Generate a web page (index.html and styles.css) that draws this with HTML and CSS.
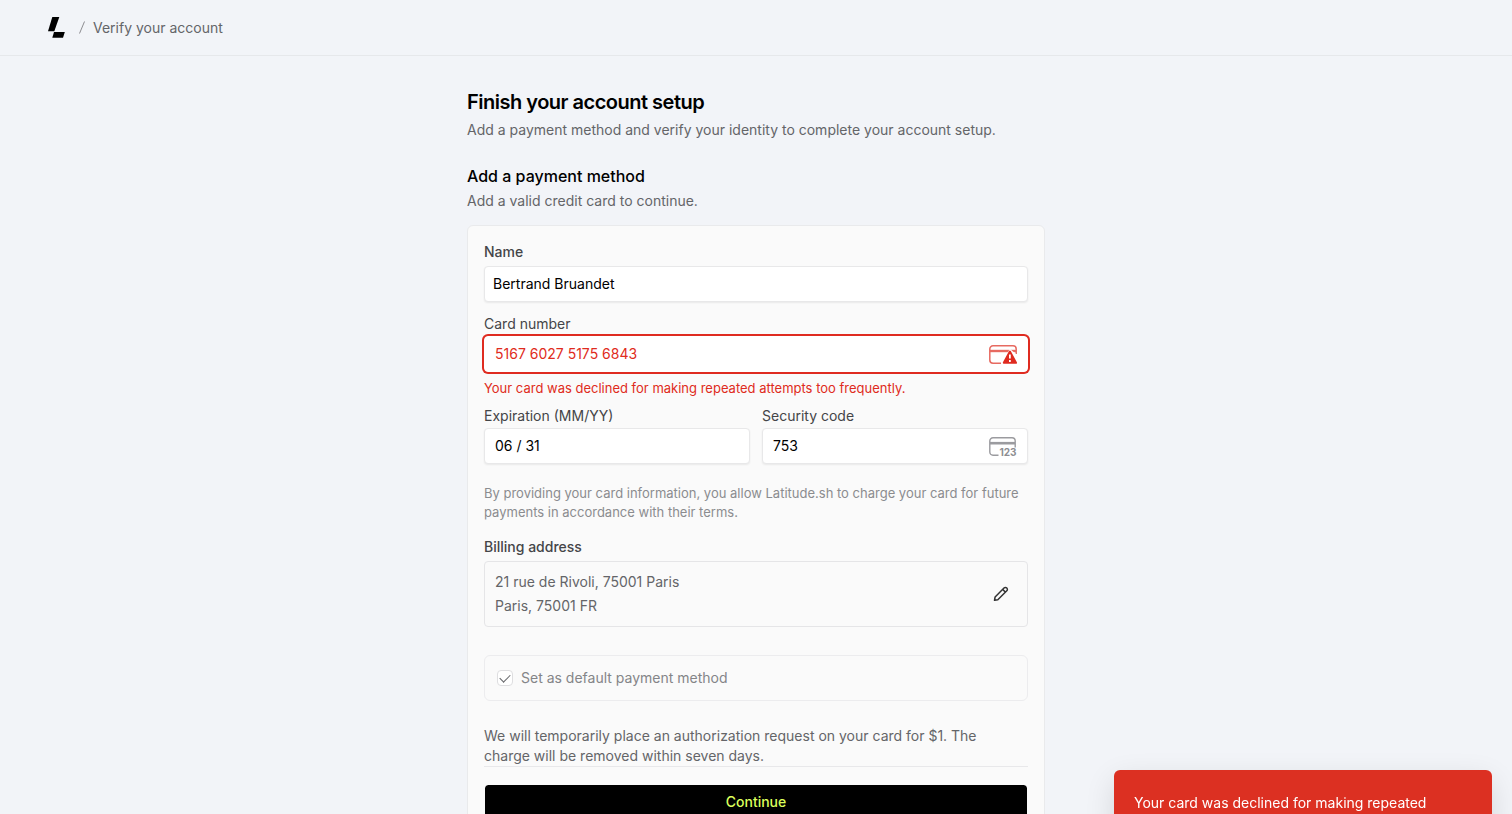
FILE: index.html
```html
<!DOCTYPE html>
<html lang="en">
<head>
    <meta charset="utf-8">
    <meta name="viewport" content="width=device-width, initial-scale=1">
    <title>Verify your account</title>
    <link rel="stylesheet" href="styles.css">
</head>
<body>
    <header class="topbar">
        <a href="#" class="logo" aria-label="Latitude.sh">
            <svg width="17" height="21" viewBox="0 0 17 21">
                <path d="M4.300 0H11.300L6.300 14.300H0z"></path>
                <path d="M6 15H16.800L15 20.800H4.300z"></path>
            </svg>
        </a>
        <svg class="slash" width="6" height="13" viewBox="0 0 6 13"><path d="M5.500.5l-5 12"></path></svg>
        <span class="crumb">Verify your account</span>
    </header>

    <main class="setup">
        <h1>Finish your account setup</h1>
        <p class="intro">Add a payment method and verify your identity to complete your account setup.</p>

        <h2>Add a payment method</h2>
        <p class="hint">Add a valid credit card to continue.</p>

        <form class="card">
            <div class="field">
                <label for="name">Name</label>
                <input type="text" id="name" class="name-input" value="Bertrand Bruandet">
            </div>

            <div class="field stripe-field">
                <label for="number">Card number</label>
                <div class="input-wrap">
                    <input type="text" id="number" class="invalid" value="5167 6027 5175 6843" aria-describedby="number-error">
                    <svg class="input-icon" width="28" height="20" viewBox="0 0 28 20">
                        <g fill="none" stroke="#e76a61" stroke-width="1.500">
                            <path d="M12 18.200H4A3.200 3.200 0 0 1 .8 15V4A3.200 3.200 0 0 1 4 .8h20A3.200 3.200 0 0 1 27.200 4v5"></path>
                            <path d="M1 6h26" stroke-width="2.400"></path>
                        </g>
                        <path d="M20.800 3.800L12.500 19.500H28V10z" fill="#fff"></path>
                        <path d="M20.900 6.600L27 17.800H14.800z" fill="#df2b20" stroke="#df2b20" stroke-width="2" stroke-linejoin="round"></path>
                        <path d="M20.900 9.500v4M20.900 15v2" stroke="#fff" stroke-width="1.800"></path>
                    </svg>
                </div>
                <p class="error" id="number-error">Your card was declined for making repeated attempts too frequently.</p>
            </div>

            <div class="field-row">
                <div>
                    <label for="expiry">Expiration (MM/YY)</label>
                    <input type="text" id="expiry" value="06 / 31">
                </div>
                <div>
                    <label for="cvc">Security code</label>
                    <div class="input-wrap">
                        <input type="text" id="cvc" value="753">
                        <svg class="input-icon" width="28" height="20" viewBox="0 0 28 20">
                            <g fill="none" stroke="#9b9b9f" stroke-width="1.400">
                                <path d="M9.500 18.200H4A3.200 3.200 0 0 1 .8 15V4A3.200 3.200 0 0 1 4 .8h19A3.200 3.200 0 0 1 26.200 4v6.500"></path>
                                <path d="M1 6.200h25" stroke-width="2.600"></path>
                            </g>
                            <text x="10.500" y="19">123</text>
                        </svg>
                    </div>
                </div>
            </div>

            <p class="terms">By providing your card information, you allow Latitude.sh to charge your card for future payments in accordance with their terms.</p>

            <h3>Billing address</h3>
            <div class="address">
                <address>21 rue de Rivoli, 75001 Paris<br>Paris, 75001 FR</address>
                <button type="button" class="edit" aria-label="Edit address">
                    <svg width="16" height="16" viewBox="0 0 16 16">
                        <path d="M1.500 14.300l.6-3.300 8.900-9a1.900 1.900 0 0 1 2.800 2.800l-9 8.900zM9.700 3.400l2.800 2.800"></path>
                    </svg>
                </button>
            </div>

            <label class="default-method">
                <input type="checkbox" checked disabled>
                <span>Set as default payment method</span>
            </label>

            <p class="notice">We will temporarily place an authorization request on your card for $1. The charge will be removed within seven days.</p>

            <button type="submit" class="continue">Continue</button>
        </form>
    </main>

    <div class="toast" role="alert">Your card was declined for making repeated attempts too frequently.</div>
</body>
</html>
```
FILE: styles.css
```css
* { box-sizing: border-box; }
body { margin: 0; background: #f2f4f8; color: #000; font-family: Inter, "Liberation Sans", sans-serif; font-size: 14px; line-height: 20px; }
h1, h2, h3, p { margin: 0; }
input, button { font: inherit; }

.topbar { display: flex; align-items: center; height: 56px; padding: 0 48px; border-bottom: 1px solid #e6e8eb; }
.logo { display: flex; }
.slash { margin: 0 8px 0 14px; fill: none; stroke: #8c8d90; }
.crumb { color: #646568; }

.setup { max-width: 578px; margin: 0 auto; padding: 32px 0; }
h1 { font-size: 20px; line-height: 28px; font-weight: 600; letter-spacing: -0.025em; }
.intro { margin-top: 4px; color: #646568; }
h2 { margin-top: 24px; font-size: 16px; line-height: 24px; font-weight: 500; }
.hint { margin-top: 3px; color: #646568; }

.card { margin-top: 14px; padding: 16px; background: #fafafa; border: 1px solid #e9eaec; border-radius: 6px; }
label, h3 { display: block; color: #444548; font-size: 14px; font-weight: 500; }
.card input[type="text"] { display: block; width: 100%; height: 36px; padding: 0 10px 2px; background: #fff; color: #000; border: 1px solid #e8e8e9; border-radius: 4px; box-shadow: 0 1px 2px rgba(0,0,0,0.07); outline: none; }
.card input.name-input { margin-top: 4px; padding-left: 8px; }
.stripe-field { margin-top: 12px; }
.stripe-field label, .field-row label { margin-bottom: 2px; font-weight: 400; }
.card input.invalid { color: #df2b20; border-color: #fff; box-shadow: 0 0 0 2px #df2b20; }
.input-wrap { position: relative; }
.input-icon { position: absolute; top: 9px; right: 11px; }
.input-icon text { font: 700 10px Inter, sans-serif; fill: #8d8d91; }
.error { margin-top: 6px; color: #df2b20; font-size: 13px; }
.field-row { display: grid; grid-template-columns: 1fr 1fr; gap: 12px; margin-top: 8px; }
.terms { margin-top: 20px; color: #8b8c8f; font-size: 13px; line-height: 19px; }

h3 { margin-top: 15px; }
.address { display: flex; align-items: center; justify-content: space-between; margin-top: 4px; padding: 8px 18px 8px 10px; border: 1px solid #e5e5e7; border-radius: 4px; }
address { color: #646568; font-style: normal; line-height: 24px; }
.edit { display: flex; padding: 0; background: none; border: none; cursor: pointer; }
.edit svg { fill: none; stroke: #333; stroke-width: 1.5; stroke-linejoin: round; }

.default-method { display: flex; align-items: center; gap: 8px; margin-top: 28px; padding: 12px; border: 1px solid #ececee; border-radius: 6px; color: #848588; font-weight: 400; }
.default-method input { appearance: none; display: grid; place-items: center; width: 16px; height: 16px; margin: 0; background: #fff; border: 1px solid #dedee0; border-radius: 4px; }
.default-method input:checked::before { content: ""; width: 9px; height: 5px; margin-bottom: 3px; border-left: 1px solid #66676a; border-bottom: 1px solid #66676a; transform: rotate(-45deg); }

.notice { margin-top: 25px; padding-right: 16px; color: #646568; border-bottom: 1px solid #e8e8ea; }
.continue { display: block; width: 100%; height: 36px; margin-top: 17px; background: #000; color: #dcff5c; border: 1px solid #fafafa; border-radius: 4px; font-weight: 500; cursor: pointer; background-clip: padding-box; }

.toast { position: fixed; right: 20px; bottom: -44px; width: 378px; padding: 22px 20px; background: #dc3022; color: #fff; border-radius: 6px; line-height: 22px; box-shadow: 0 10px 30px rgba(0,0,0,0.12); }
```
